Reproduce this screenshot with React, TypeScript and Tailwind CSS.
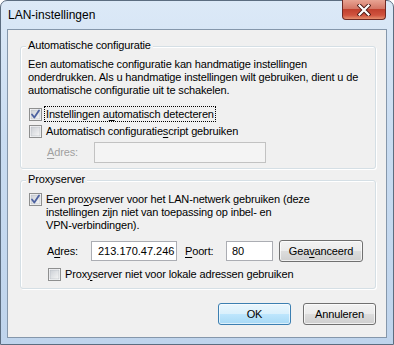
import React from "react";

const font = { fontFamily: '"Liberation Sans", Arial, sans-serif' };

function Check({ checked }: { checked: boolean }) {
  return (
    <svg width="13" height="13" viewBox="0 0 13 13" className="shrink-0">
      <defs>
        <linearGradient id="cbg" x1="0" y1="0" x2="1" y2="1">
          <stop offset="0" stopColor="#cbcfd5" />
          <stop offset="1" stopColor="#f6f6f6" />
        </linearGradient>
      </defs>
      <rect x="0.5" y="0.5" width="12" height="12" fill="#ffffff" stroke="#8e8f8f" />
      <rect x="2" y="2" width="9" height="9" fill="url(#cbg)" stroke="#b6bbc2" strokeWidth="0.6" />
      {checked && (
        <path d="M3 6.5 L5.3 9.5 L10 2.5" fill="none" stroke="#4c61a0" strokeWidth="1.8" strokeLinejoin="round" strokeLinecap="round" />
      )}
    </svg>
  );
}

function U({ children }: { children: React.ReactNode }) {
  return <span className="underline underline-offset-2">{children}</span>;
}

function Btn({ children, primary }: { children: React.ReactNode; primary?: boolean }) {
  return (
    <div
      className={
        "w-[73px] h-[22px] rounded-[3px] border flex items-center justify-center " +
        (primary
          ? "border-[#3c7fb1] bg-[linear-gradient(#eaf6fd_0%,#d9f0fc_50%,#bee6fd_50%,#a7d9f5_100%)] shadow-[inset_0_0_0_1px_rgba(255,255,255,0.6)]"
          : "border-[#707070] bg-[linear-gradient(#f2f2f2_0%,#ebebeb_50%,#dddddd_50%,#cfcfcf_100%)] shadow-[inset_0_0_0_1px_rgba(255,255,255,0.7)]")
      }
    >
      {children}
    </div>
  );
}

function Group({ title, className, children }: { title: string; className?: string; children: React.ReactNode }) {
  return (
    <div className={"relative border border-[#d5dfe5] rounded-[3px] pl-[7px] pr-[6px] shadow-[inset_1px_1px_0_#ffffff,1px_1px_0_#ffffff] " + (className || "")}>
      <span className="absolute left-[5px] top-[-8px] px-[2px] bg-[#f0f0f0] leading-[13px]">{title}</span>
      {children}
    </div>
  );
}

export default function App() {
  return (
    <div style={font} className="w-[394px] h-[345px] text-[11px] tracking-[-0.15px] leading-[13px] text-black">
      <div className="w-full h-full rounded-t-[7px] border border-[#5c6d80] bg-[linear-gradient(180deg,#dce9f7_0%,#c9dcf1_40%,#bfd4ec_100%)] flex flex-col relative">
        {/* title bar */}
        <div className="h-[28px] flex items-center pl-[7px] text-[12px] tracking-normal text-black">
          LAN-instellingen
        </div>
        {/* close button */}
        <div className="absolute top-[-1px] right-[7px] w-[44px] h-[20px] rounded-b-[4px] border border-[#6e2a24] border-t-0 bg-[linear-gradient(180deg,#e8a493_0%,#d47766_45%,#c1412e_50%,#d0533e_80%,#e5906f_100%)] flex items-center justify-center">
          <svg width="14" height="12" viewBox="0 0 14 12">
            <path d="M2.5 1.5 L11.5 10.5 M11.5 1.5 L2.5 10.5" stroke="#4a1a15" strokeWidth="4" strokeLinecap="square" />
            <path d="M2.5 1.5 L11.5 10.5 M11.5 1.5 L2.5 10.5" stroke="#ffffff" strokeWidth="2.2" strokeLinecap="square" />
          </svg>
        </div>
        {/* client */}
        <div className="mx-[6px] mb-[6px] flex-1 border border-[#8597ab] bg-[#f0f0f0] pl-[12px] pr-[10px] pt-[16px] flex flex-col">
          {/* group 1 */}
          <Group title="Automatische configuratie" className="pt-[11px] pb-[5px]">
            <div className="whitespace-nowrap">
              Een automatische configuratie kan handmatige instellingen
              <br />
              onderdrukken. Als u handmatige instellingen wilt gebruiken, dient u de
              <br />
              automatische configuratie uit te schakelen.
            </div>
            <div className="flex items-center gap-[3px] mt-[9px] h-[16px] pl-[1px]">
              <Check checked />
              <span className="outline outline-1 outline-dotted outline-black px-[1px] leading-[14px]">
                Instellingen a<U>u</U>tomatisch detecteren
              </span>
            </div>
            <div className="flex items-center gap-[3px] mt-[1px] h-[16px] pl-[1px]">
              <Check checked={false} />
              <span className="pl-[1px]">
                Automatisch configuratie<U>s</U>cript gebruiken
              </span>
            </div>
            <div className="flex items-center mt-[3px] h-[21px]">
              <span className="w-[66px] shrink-0 pl-[19px] text-[#a0a0a0]">
                <U>A</U>dres:
              </span>
              <div className="w-[172px] h-[21px] border border-[#c2c2c2] bg-[#f4f4f4]" />
            </div>
          </Group>

          {/* group 2 */}
          <Group title="Proxyserver" className="mt-[11px] pt-[12px] pb-[6px]">
            <div className="flex items-start gap-[3px] pl-[1px]">
              <div className="pt-[0px]">
                <Check checked />
              </div>
              <div className="whitespace-nowrap pl-[1px]">
                Een pro<U>x</U>yserver voor het LAN-netwerk gebruiken (deze
                <br />
                instellingen zijn niet van toepassing op inbel- en
                <br />
                VPN-verbindingen).
              </div>
            </div>
            <div className="flex items-center mt-[8px] h-[22px]">
              <span className="w-[63px] shrink-0 pl-[19px]">
                A<U>d</U>res:
              </span>
              <div className="w-[86px] h-[20px] border border-[#abadb3] bg-white flex items-center pl-[6px] tracking-normal">
                213.170.47.246
              </div>
              <span className="ml-[8px] w-[41px] shrink-0">
                <U>P</U>oort:
              </span>
              <div className="w-[47px] h-[20px] border border-[#abadb3] bg-white flex items-center pl-[5px] tracking-normal">80</div>
              <div className="ml-[6px] w-[84px] h-[22px] rounded-[3px] border border-[#707070] bg-[linear-gradient(#f2f2f2_0%,#ebebeb_50%,#dddddd_50%,#cfcfcf_100%)] shadow-[inset_0_0_0_1px_rgba(255,255,255,0.7)] flex items-center justify-center">
                Gea<U>v</U>anceerd
              </div>
            </div>
            <div className="flex items-center gap-[3px] mt-[4px] pl-[20px] h-[16px]">
              <Check checked={false} />
              <span className="pl-[1px]">
                Prox<U>y</U>server niet voor lokale adressen gebruiken
              </span>
            </div>
          </Group>

          <div className="flex justify-end gap-[12px] mt-[14px]">
            <Btn primary>OK</Btn>
            <Btn>Annuleren</Btn>
          </div>
        </div>
      </div>
    </div>
  );
}
